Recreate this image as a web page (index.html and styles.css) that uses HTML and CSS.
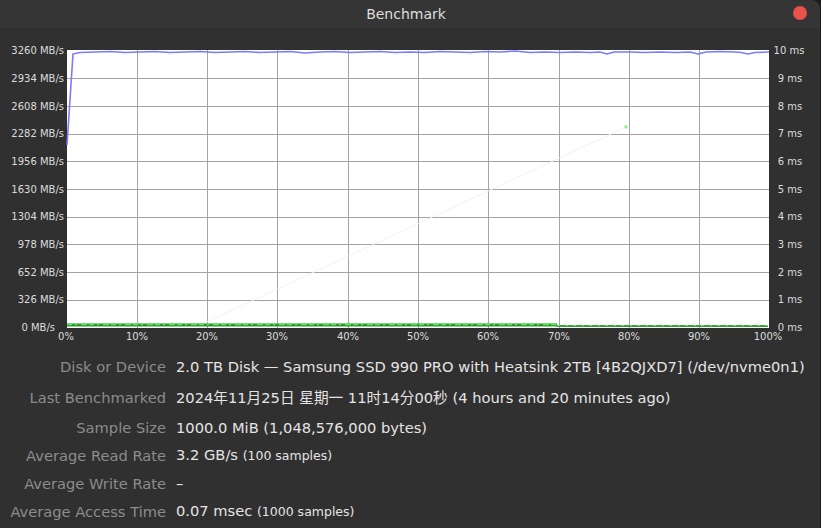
FILE: index.html
```html
<!DOCTYPE html>
<html>
<head>
<meta charset="utf-8">
<link rel="stylesheet" href="styles.css">
</head>
<body>
<div class="window">
  <header class="titlebar">
    <span class="title">Benchmark</span>
    <span class="close"></span>
  </header>
  <svg class="chart" width="821" height="314" viewBox="0 28 821 314" xmlns="http://www.w3.org/2000/svg">
    <rect x="67" y="50" width="702" height="278" fill="#ffffff"/>
    <g stroke="#a3a3a3" stroke-width="1">
      <line x1="67" y1="78.5" x2="769" y2="78.5"/>
      <line x1="67" y1="106.5" x2="769" y2="106.5"/>
      <line x1="67" y1="134.5" x2="769" y2="134.5"/>
      <line x1="67" y1="161.5" x2="769" y2="161.5"/>
      <line x1="67" y1="189.5" x2="769" y2="189.5"/>
      <line x1="67" y1="217.5" x2="769" y2="217.5"/>
      <line x1="67" y1="244.5" x2="769" y2="244.5"/>
      <line x1="67" y1="272.5" x2="769" y2="272.5"/>
      <line x1="67" y1="300.5" x2="769" y2="300.5"/>
      <line x1="137.5" y1="50" x2="137.5" y2="328"/>
      <line x1="207.5" y1="50" x2="207.5" y2="328"/>
      <line x1="277.5" y1="50" x2="277.5" y2="328"/>
      <line x1="348.5" y1="50" x2="348.5" y2="328"/>
      <line x1="418.5" y1="50" x2="418.5" y2="328"/>
      <line x1="488.5" y1="50" x2="488.5" y2="328"/>
      <line x1="559.5" y1="50" x2="559.5" y2="328"/>
      <line x1="629.5" y1="50" x2="629.5" y2="328"/>
      <line x1="699.5" y1="50" x2="699.5" y2="328"/>
    </g>
    <line x1="200" y1="325" x2="626" y2="127" stroke="#f2f2f2" stroke-width="1"/>
    <rect x="624.5" y="125.5" width="3" height="3" fill="#8cf08c"/>
    <line x1="67" y1="325" x2="557" y2="325" stroke="#2e962e" stroke-width="3"/>
    <line x1="67" y1="324.2" x2="557" y2="324.2" stroke="#5ce45c" stroke-width="2" stroke-dasharray="5 3 2 4 6 2"/>
    <line x1="557" y1="326" x2="768" y2="326" stroke="#37a037" stroke-width="2"/>
    <line x1="557" y1="325.5" x2="768" y2="325.5" stroke="#66e066" stroke-width="1.2" stroke-dasharray="3 6 2 5"/>
    <polyline fill="none" stroke="#7b7bfb" stroke-width="1.6" stroke-linejoin="round"
      points="67,145 73,54 80,52.5 95,52 110,51.5 125,52.5 140,52 155,51.5 170,52.5 185,52 200,51.5 215,52.5 230,52 245,51.5 260,52.5 275,52 290,51.5 305,53 320,52 335,51.5 350,52.5 365,52 380,51.5 395,52.5 410,52 425,52.5 440,51.5 455,52 470,52.5 485,51.5 500,52 515,51 530,52.5 545,52 560,52.5 575,52 590,52.5 600,52 607,54 614,52 630,52 645,52.5 660,52 675,52.5 690,52 698,54 706,52 720,51.5 735,52 741,52.5 748,54 755,52.5 769,52"/>
    <g class="ylab" text-anchor="end">
      <text x="64" y="54">3260 MB/s</text>
      <text x="64" y="82">2934 MB/s</text>
      <text x="64" y="110">2608 MB/s</text>
      <text x="64" y="137">2282 MB/s</text>
      <text x="64" y="165">1956 MB/s</text>
      <text x="64" y="193">1630 MB/s</text>
      <text x="64" y="220">1304 MB/s</text>
      <text x="64" y="248">978 MB/s</text>
      <text x="64" y="276">652 MB/s</text>
      <text x="64" y="303">326 MB/s</text>
      <text x="55" y="331">0 MB/s</text>
    </g>
    <g class="ylab" text-anchor="middle">
      <text x="789" y="54">10 ms</text>
      <text x="790" y="82">9 ms</text>
      <text x="790" y="110">8 ms</text>
      <text x="790" y="137">7 ms</text>
      <text x="790" y="165">6 ms</text>
      <text x="790" y="193">5 ms</text>
      <text x="790" y="220">4 ms</text>
      <text x="790" y="248">3 ms</text>
      <text x="790" y="276">2 ms</text>
      <text x="790" y="303">1 ms</text>
      <text x="790" y="331">0 ms</text>
    </g>
    <g class="ylab" text-anchor="middle">
      <text x="66" y="340">0%</text>
      <text x="137" y="340">10%</text>
      <text x="207" y="340">20%</text>
      <text x="277" y="340">30%</text>
      <text x="348" y="340">40%</text>
      <text x="418" y="340">50%</text>
      <text x="488" y="340">60%</text>
      <text x="559" y="340">70%</text>
      <text x="629" y="340">80%</text>
      <text x="699" y="340">90%</text>
      <text x="768" y="340">100%</text>
    </g>
  </svg>
  <div class="info">
    <div class="label">Disk or Device</div>
    <div class="value">2.0 TB Disk — Samsung SSD 990 PRO with Heatsink 2TB [4B2QJXD7] (/dev/nvme0n1)</div>
    <div class="label">Last Benchmarked</div>
    <div class="value">2024年11月25日 星期一 11时14分00秒 (4 hours and 20 minutes ago)</div>
    <div class="label">Sample Size</div>
    <div class="value">1000.0 MiB (1,048,576,000 bytes)</div>
    <div class="label">Average Read Rate</div>
    <div class="value">3.2 GB/s <small>(100 samples)</small></div>
    <div class="label">Average Write Rate</div>
    <div class="value">–</div>
    <div class="label">Average Access Time</div>
    <div class="value">0.07 msec <small>(1000 samples)</small></div>
  </div>
</div>
</body>
</html>
```

FILE: styles.css
```css
html, body {
  margin: 0;
  padding: 0;
  background: #1c1c1c;
}
body {
  width: 821px;
  height: 528px;
  overflow: hidden;
  font-family: "DejaVu Sans", "Noto Sans CJK SC", sans-serif;
}
.window {
  width: 820px;
  height: 528px;
  background: #303030;
  border-right: 1px solid #1a1a1a;
  border-top-right-radius: 9px;
  overflow: hidden;
}
.titlebar {
  height: 28px;
  background: #353535;
  display: flex;
  align-items: center;
  justify-content: center;
  position: relative;
}
.title {
  color: #dedede;
  font-size: 14px;
  margin-left: -8px;
}
.close {
  position: absolute;
  right: 13px;
  top: 6px;
  width: 14px;
  height: 14px;
  border-radius: 50%;
  background: #e8524a;
}
.chart {
  display: block;
}
.ylab {
  font-family: "DejaVu Sans", sans-serif;
  font-size: 10px;
  fill: #dcdcdc;
}
.info {
  display: grid;
  grid-template-columns: 166px 1fr;
  grid-template-rows: 31px 31px 30px 28px 28px 28px;
  column-gap: 10px;
  align-items: end;
  font-size: 14.67px;
  line-height: 18px;
  margin-top: 3px;
}
.label {
  text-align: right;
  color: #8c8c8c;
  white-space: nowrap;
}
.value {
  color: #e4e4e4;
  white-space: nowrap;
}
.value small {
  font-size: 12.5px;
}
```
